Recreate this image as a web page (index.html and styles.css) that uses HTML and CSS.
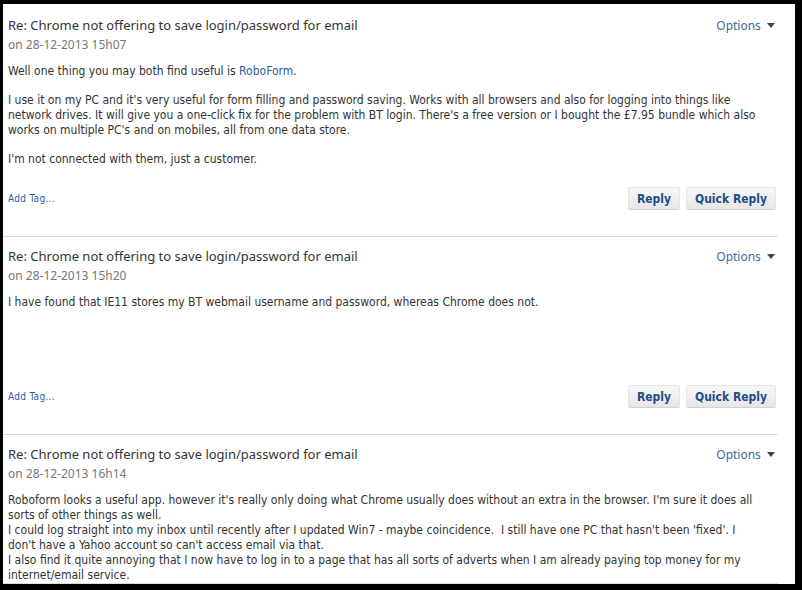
FILE: index.html
```html
<!DOCTYPE html>
<html lang="en">
<head>
  <meta charset="UTF-8">
  <title>Re: Chrome not offering to save login/password for email</title>
  <link rel="stylesheet" href="styles.css">
</head>
<body>
  <div class="thread">

    <!-- reply 1 -->
    <div class="post">
      <div class="post-head">
        <div>
          <h2 class="post-title">Re: Chrome not offering to save login/password for email</h2>
          <div class="post-date">on 28-12-2013 15h07</div>
        </div>
        <a class="options" href="#">Options <span class="caret"></span></a>
      </div>
      <div class="post-body">
        <p>Well one thing you may both find useful is <a href="#">RoboForm</a>.</p>
        <p>I use it on my PC and it's very useful for form filling and password saving. Works with all browsers and also for logging into things like network drives. It will give you a one-click fix for the problem with BT login. There's a free version or I bought the £7.95 bundle which also works on multiple PC's and on mobiles, all from one data store.</p>
        <p>I'm not connected with them, just a customer.</p>
      </div>
      <div class="post-foot">
        <a class="add-tag" href="#">Add Tag...</a>
        <div class="actions">
          <button class="btn">Reply</button>
          <button class="btn">Quick Reply</button>
        </div>
      </div>
    </div>

    <!-- reply 2 -->
    <div class="post">
      <div class="post-head">
        <div>
          <h2 class="post-title">Re: Chrome not offering to save login/password for email</h2>
          <div class="post-date">on 28-12-2013 15h20</div>
        </div>
        <a class="options" href="#">Options <span class="caret"></span></a>
      </div>
      <div class="post-body">
        <p>I have found that IE11 stores my BT webmail username and password, whereas Chrome does not.</p>
      </div>
      <div class="post-foot">
        <a class="add-tag" href="#">Add Tag...</a>
        <div class="actions">
          <button class="btn">Reply</button>
          <button class="btn">Quick Reply</button>
        </div>
      </div>
    </div>

    <!-- reply 3 -->
    <div class="post">
      <div class="post-head">
        <div>
          <h2 class="post-title">Re: Chrome not offering to save login/password for email</h2>
          <div class="post-date">on 28-12-2013 16h14</div>
        </div>
        <a class="options" href="#">Options <span class="caret"></span></a>
      </div>
      <div class="post-body">
        <p>Roboform looks a useful app. however it's really only doing what Chrome usually does without an extra in the browser. I'm sure it does all sorts of other things as well.<br>
        I could log straight into my inbox until recently after I updated Win7 - maybe coincidence.&nbsp; I still have one PC that hasn't been 'fixed'. I don't have a Yahoo account so can't access email via that.<br>
        I also find it quite annoying that I now have to log in to a page that has all sorts of adverts when I am already paying top money for my internet/email service.</p>
      </div>
    </div>

  </div>
</body>
</html>
```

FILE: styles.css
```css
* { margin:0; padding:0; box-sizing:border-box; }
html, body { background:#000; }
body { padding:4px 0 0 3px; }

.thread {
  width:792px; height:580px;
  background:#fff; overflow:hidden;
}

.post {
  margin-right:17px;
  padding:9px 0 0 5px;
  border-bottom:1px solid #dcdcdc;
}
.post:first-child { padding-top:11px; }

.post-head {
  display:flex; justify-content:space-between; align-items:flex-start;
  padding-right:3px;
}
.post-title {
  font-family:"Noto Sans", sans-serif;
  font-size:13px; font-weight:normal; line-height:20px;
  color:#333;
}
.post-date {
  font-family:"Noto Sans", sans-serif;
  font-size:12px; line-height:20px; color:#777;
}
.options {
  font-family:"Noto Sans", sans-serif;
  font-size:12px; line-height:20px;
  color:#3b6c9c; text-decoration:none;
  margin-top:1px;
}
.caret {
  display:inline-block; margin-left:3px; vertical-align:2px;
  border-left:4px solid transparent; border-right:4px solid transparent;
  border-top:5px solid #444;
}

.post-body {
  font-family:"DejaVu Sans Condensed", Tahoma, sans-serif;
  font-size:12px; line-height:15px; color:#333;
  margin-top:9px; min-height:70px;
  padding-right:13px;
}
.post-body p { margin-bottom:14px; }
.post-body p:last-child { margin-bottom:0; }
.post-body a { color:#2a5fa0; text-decoration:none; }

.post-foot {
  display:flex; justify-content:space-between; align-items:center;
  margin-top:20px; padding-bottom:26px; padding-right:2px;
}
.add-tag {
  font-family:"DejaVu Sans Condensed", Tahoma, sans-serif;
  font-size:10px; letter-spacing:0.3px;
  color:#2a5fa0; text-decoration:none;
}
.actions { display:flex; gap:6px; }
.btn {
  font-family:"DejaVu Sans Condensed", Tahoma, sans-serif;
  font-size:12px; font-weight:bold; color:#1f4e86;
  height:23px; padding:0 8px;
  background:linear-gradient(to bottom, #f7f7f7, #e6e6e6);
  border:1px solid #e4e4e4; border-bottom-color:#d2d2d2;
  border-radius:2px; cursor:pointer;
}
```
